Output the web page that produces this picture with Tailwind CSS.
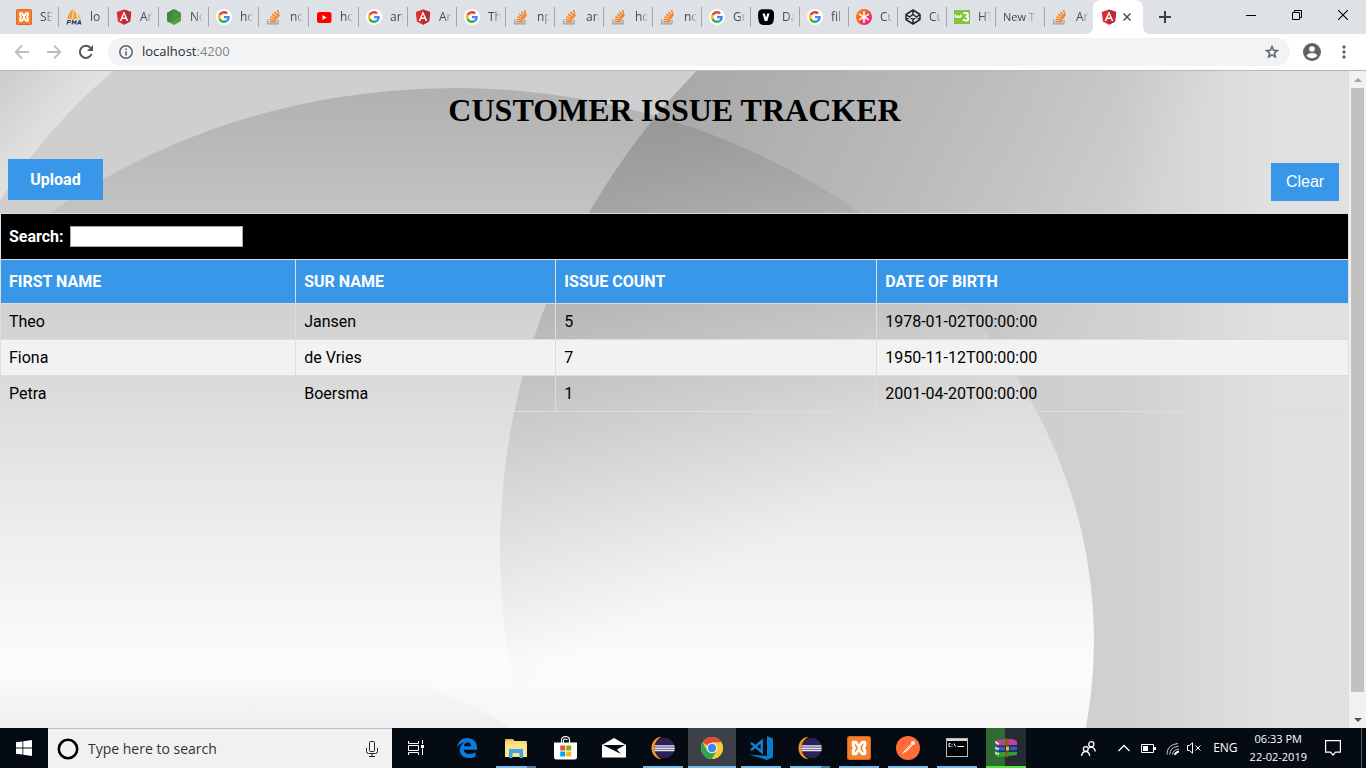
<!DOCTYPE html>
<html lang="en">
<head>
<meta charset="utf-8">
<title>Customer Issue Tracker</title>
<script src="https://cdn.jsdelivr.net/npm/@tailwindcss/browser@4"></script>
</head>
<body class="flex h-screen flex-col overflow-hidden bg-white font-['Open_Sans','Noto_Sans',sans-serif]">

<!-- Shared icons -->
<svg class="hidden" aria-hidden="true">
  <symbol id="google" viewBox="0 0 16 16"><circle cx="8" cy="8" r="8" fill="#fff"/><g transform="translate(2 2) scale(.25)"><path fill="#ea4335" d="M24 9.500c3.540 0 6.710 1.220 9.210 3.600l6.850-6.850C35.900 2.380 30.470 0 24 0 14.620 0 6.510 5.380 2.560 13.220l7.980 6.190C12.430 13.720 17.740 9.500 24 9.500z"/><path fill="#4285f4" d="M46.980 24.550c0-1.570-.15-3.090-.38-4.550H24v9.020h12.940c-.58 2.960-2.260 5.480-4.780 7.180l7.730 6c4.510-4.180 7.090-10.360 7.090-17.650z"/><path fill="#fbbc05" d="M10.530 28.590c-.48-1.450-.76-2.990-.76-4.590s.27-3.140.76-4.590l-7.980-6.190C.92 16.460 0 20.120 0 24c0 3.880.92 7.540 2.560 10.780l7.970-6.190z"/><path fill="#34a853" d="M24 48c6.480 0 11.930-2.130 15.890-5.810l-7.730-6c-2.150 1.450-4.920 2.300-8.160 2.300-6.260 0-11.570-4.220-13.470-9.910l-7.980 6.190C6.510 42.620 14.620 48 24 48z"/></g></symbol>
  <symbol id="angular" viewBox="0 0 16 16"><path d="M8 .4 15.200 3 14.100 12.400 8 15.800 1.900 12.400.8 3z" fill="#dd2b36"/><path d="M8 .4 15.200 3 14.100 12.400 8 15.800z" fill="#b52e31"/><path d="M8 2.200 3.600 12h1.700l.9-2.100h3.600l.9 2.100h1.700zM8 5.300l1.300 3.200H6.700z" fill="#fff"/></symbol>
  <symbol id="stack" viewBox="0 0 16 16" fill="none"><path d="M1.700 10.500v4.300h10.300v-4.300" stroke="#9aa0a6" stroke-width="1.200"/><path d="M3.500 12.700h6.700M3.700 10.300l6.600 1M4.500 7.700l6.300 2.200M6.100 5.100l5.600 3.800M8.500 2.800l4 5.200M11.600 1l1.500 6" stroke="#f48024" stroke-width="1.400"/></symbol>
  <symbol id="xampp" viewBox="0 0 24 24"><rect width="24" height="24" rx="2.500" fill="#d9631a"/><rect x="1" y="1" width="22" height="22" rx="2" fill="#f4812c"/><path d="M6.200 6.200h2.300c1.500 0 1 3.300 3.500 3.300s2-3.300 3.500-3.300h2.300v3.300L16.500 12l1.300 2.500v3.300h-2.300c-1.500 0-1-3.300-3.500-3.300s-2 3.300-3.500 3.300H6.200v-3.300L7.500 12 6.200 9.500zM12 9.500v5" fill="none" stroke="#fff" stroke-width="2.900" stroke-linejoin="round"/></symbol>
  <symbol id="eclipse" viewBox="0 0 24 24"><path d="M10.500.8C4.600 1 .5 6 .5 12s4.100 11 10 11.200C6.500 21 3.800 17 3.800 12S6.500 3 10.500.8z" fill="#f7941e"/><circle cx="13.500" cy="12" r="10.300" fill="#2c2255"/><path d="M3.600 9.200h19.800v1.600H3.600zm-.3 2.200h20.400v1.700H3.300zm.3 2.400h19.800v1.500H3.600z" fill="#e8e6f2"/><path d="M3.500 10.800h20v.6h-20zm0 2.300h20v.7h-20z" fill="#8c85b4"/></symbol>
</svg>

<!-- Tab strip -->
<header class="flex h-[34px] shrink-0 items-stretch bg-[#dee1e6] pl-[9px] text-[12px] text-[#45494d]">
  <nav class="flex" aria-label="Tabs">
    <div class="flex w-[50px] items-center pl-[7px]"><svg class="size-4 shrink-0"><use href="#xampp"/></svg><span class="ml-2 w-[13px] overflow-hidden whitespace-nowrap [mask-image:linear-gradient(to_right,black_40%,transparent)]">SE</span><i class="ml-auto h-5 w-px bg-[#a2a5a9]"></i></div>
    <div class="flex w-[50px] items-center pl-[7px]"><svg class="size-4 shrink-0" viewBox="0 0 16 16"><path d="M7 0C4 2 2 6 1 10h5zM8 1c2 2 3 5 3 9H7z" fill="#f6a22d"/><path d="M12 4c1.500 2 2 4 3.500 6H12z" fill="#f6c06a"/><path d="M1 15.500l1-4h1.800q1 0 .8 1t-1.400 1H2M6 15.500l1-4 1.300 2.500 2-2.500-.7 4M11.500 15.500l2-4h.5l.8 4M12.300 14.300h2" fill="none" stroke="#343e75" stroke-width="1.200"/></svg><span class="ml-2 w-[13px] overflow-hidden whitespace-nowrap [mask-image:linear-gradient(to_right,black_70%,transparent)]">lo</span><i class="ml-auto h-5 w-px bg-[#a2a5a9]"></i></div>
    <div class="flex w-[50px] items-center pl-[7px]"><svg class="size-4 shrink-0"><use href="#angular"/></svg><span class="ml-2 w-[13px] overflow-hidden whitespace-nowrap [mask-image:linear-gradient(to_right,black_40%,transparent)]">An</span><i class="ml-auto h-5 w-px bg-[#a2a5a9]"></i></div>
    <div class="flex w-[50px] items-center pl-[7px]"><svg class="size-4 shrink-0" viewBox="0 0 16 16"><path d="M8 0l7 4v8l-7 4-7-4V4z" fill="#539e43"/><path d="M8 0 1 4v8l3 1.700z" fill="#3e863d"/><path d="M8 0l7 4v3L4 13.700z" fill="#48913f"/></svg><span class="ml-2 w-[13px] overflow-hidden whitespace-nowrap [mask-image:linear-gradient(to_right,black_40%,transparent)]">No</span><i class="ml-auto h-5 w-px bg-[#a2a5a9]"></i></div>
    <div class="flex w-[50px] items-center pl-[7px]"><svg class="size-4 shrink-0"><use href="#google"/></svg><span class="ml-2 w-[13px] overflow-hidden whitespace-nowrap [mask-image:linear-gradient(to_right,black_40%,transparent)]">ho</span><i class="ml-auto h-5 w-px bg-[#a2a5a9]"></i></div>
    <div class="flex w-[50px] items-center pl-[7px]"><svg class="size-4 shrink-0"><use href="#stack"/></svg><span class="ml-2 w-[13px] overflow-hidden whitespace-nowrap [mask-image:linear-gradient(to_right,black_40%,transparent)]">no</span><i class="ml-auto h-5 w-px bg-[#a2a5a9]"></i></div>
    <div class="flex w-[50px] items-center pl-[7px]"><svg class="size-4 shrink-0" viewBox="0 0 16 16"><rect x="1" y="3" width="14.500" height="11" rx="2.500" fill="#f00"/><path d="M6.500 6v5L10.500 8.500z" fill="#fff"/></svg><span class="ml-2 w-[13px] overflow-hidden whitespace-nowrap [mask-image:linear-gradient(to_right,black_40%,transparent)]">ho</span><i class="ml-auto h-5 w-px bg-[#a2a5a9]"></i></div>
    <div class="flex w-[49px] items-center pl-[7px]"><svg class="size-4 shrink-0"><use href="#google"/></svg><span class="ml-2 w-[13px] overflow-hidden whitespace-nowrap [mask-image:linear-gradient(to_right,black_70%,transparent)]">an</span><i class="ml-auto h-5 w-px bg-[#a2a5a9]"></i></div>
    <div class="flex w-[49px] items-center pl-[7px]"><svg class="size-4 shrink-0"><use href="#angular"/></svg><span class="ml-2 w-[13px] overflow-hidden whitespace-nowrap [mask-image:linear-gradient(to_right,black_40%,transparent)]">An</span><i class="ml-auto h-5 w-px bg-[#a2a5a9]"></i></div>
    <div class="flex w-[49px] items-center pl-[7px]"><svg class="size-4 shrink-0"><use href="#google"/></svg><span class="ml-2 w-[13px] overflow-hidden whitespace-nowrap [mask-image:linear-gradient(to_right,black_40%,transparent)]">Th</span><i class="ml-auto h-5 w-px bg-[#a2a5a9]"></i></div>
    <div class="flex w-[49px] items-center pl-[7px]"><svg class="size-4 shrink-0"><use href="#stack"/></svg><span class="ml-2 w-[13px] overflow-hidden whitespace-nowrap [mask-image:linear-gradient(to_right,black_40%,transparent)]">np</span><i class="ml-auto h-5 w-px bg-[#a2a5a9]"></i></div>
    <div class="flex w-[49px] items-center pl-[7px]"><svg class="size-4 shrink-0"><use href="#stack"/></svg><span class="ml-2 w-[13px] overflow-hidden whitespace-nowrap [mask-image:linear-gradient(to_right,black_70%,transparent)]">an</span><i class="ml-auto h-5 w-px bg-[#a2a5a9]"></i></div>
    <div class="flex w-[49px] items-center pl-[7px]"><svg class="size-4 shrink-0"><use href="#stack"/></svg><span class="ml-2 w-[13px] overflow-hidden whitespace-nowrap [mask-image:linear-gradient(to_right,black_40%,transparent)]">ho</span><i class="ml-auto h-5 w-px bg-[#a2a5a9]"></i></div>
    <div class="flex w-[49px] items-center pl-[7px]"><svg class="size-4 shrink-0"><use href="#stack"/></svg><span class="ml-2 w-[13px] overflow-hidden whitespace-nowrap [mask-image:linear-gradient(to_right,black_40%,transparent)]">no</span><i class="ml-auto h-5 w-px bg-[#a2a5a9]"></i></div>
    <div class="flex w-[49px] items-center pl-[7px]"><svg class="size-4 shrink-0"><use href="#google"/></svg><span class="ml-2 w-[13px] overflow-hidden whitespace-nowrap [mask-image:linear-gradient(to_right,black_40%,transparent)]">Gr</span><i class="ml-auto h-5 w-px bg-[#a2a5a9]"></i></div>
    <div class="flex w-[49px] items-center pl-[7px]"><svg class="size-4 shrink-0" viewBox="0 0 16 16"><path d="M3 .5C5 0 11 0 13 .5 15 1 15.500 2 16 4c.2 3 0 6-.5 8-.5 2.500-1.500 3.200-3.500 3.700-2 .4-6 .4-8 0-2-.5-2.800-1.500-3.300-3.700C0 9 0 6 .2 4 .5 2 1 1 3 .5z"/><path d="M4.500 4.500h2.300L8 8.500l1.300-4h2.200L9.300 12H6.700z" fill="#fff"/></svg><span class="ml-2 w-[13px] overflow-hidden whitespace-nowrap [mask-image:linear-gradient(to_right,black_40%,transparent)]">Da</span><i class="ml-auto h-5 w-px bg-[#a2a5a9]"></i></div>
    <div class="flex w-[49px] items-center pl-[7px]"><svg class="size-4 shrink-0"><use href="#google"/></svg><span class="ml-2 w-[13px] overflow-hidden whitespace-nowrap [mask-image:linear-gradient(to_right,black_40%,transparent)]">fil</span><i class="ml-auto h-5 w-px bg-[#a2a5a9]"></i></div>
    <div class="flex w-[49px] items-center pl-[7px]"><svg class="size-4 shrink-0" viewBox="0 0 16 16"><linearGradient id="snow" x1="0" y1="0" x2="1" y2="1"><stop offset=".1" stop-color="#ff8a00"/><stop offset=".9" stop-color="#e5158a"/></linearGradient><circle cx="8" cy="8" r="8" fill="url(#snow)"/><path d="M8 3v10M3.700 5.500l8.600 5M3.700 10.500l8.600-5" stroke="#fff" stroke-opacity=".9" stroke-width="1.800" stroke-linecap="round"/></svg><span class="ml-2 w-[13px] overflow-hidden whitespace-nowrap [mask-image:linear-gradient(to_right,black_40%,transparent)]">Cu</span><i class="ml-auto h-5 w-px bg-[#a2a5a9]"></i></div>
    <div class="flex w-[49px] items-center pl-[7px]"><svg class="size-4 shrink-0" viewBox="0 0 16 16" fill="none" stroke="#26282b" stroke-width="1.500" stroke-linejoin="round"><path d="M8 1l7 4.500v5L8 15l-7-4.500v-5zM8 1v4.500M8 15v-4.500M1 5.500l7 5 7-5M1 10.500l7-5 7 5"/></svg><span class="ml-2 w-[13px] overflow-hidden whitespace-nowrap [mask-image:linear-gradient(to_right,black_40%,transparent)]">Cu</span><i class="ml-auto h-5 w-px bg-[#a2a5a9]"></i></div>
    <div class="flex w-[49px] items-center pl-[7px]"><svg class="size-4 shrink-0" viewBox="0 0 16 16"><rect y="1" width="16" height="14" fill="#82c341"/><path d="M1.300 5.500v1.700c0 1.400 2.800 1.400 2.800 0V6v1.200c0 1.400 2.900 1.400 2.900 0V5.500" fill="none" stroke="#fff" stroke-width="1.500"/><path d="M9.500 5c.5-1.700 4.500-1.600 4.500.6 0 1.600-1.500 1.900-2.400 1.900 1.300 0 2.700.6 2.700 2.300 0 2.400-4.300 2.600-5 .3" fill="none" stroke="#fff" stroke-width="1.800"/></svg><span class="ml-2 w-[13px] overflow-hidden whitespace-nowrap [mask-image:linear-gradient(to_right,black_40%,transparent)]">HT</span><i class="ml-auto h-5 w-px bg-[#a2a5a9]"></i></div>
    <div class="flex w-[49px] items-center pl-[7px]"><span class="w-[34px] overflow-hidden whitespace-nowrap text-[11px] [mask-image:linear-gradient(to_right,black_65%,transparent)]">New T</span><i class="ml-auto h-5 w-px bg-[#a2a5a9]"></i></div>
    <div class="flex w-12 items-center pl-[7px]"><svg class="size-4 shrink-0"><use href="#stack"/></svg><span class="ml-2 w-[13px] overflow-hidden whitespace-nowrap [mask-image:linear-gradient(to_right,black_40%,transparent)]">An</span></div>
    <div class="relative flex w-[50px] items-center rounded-t-lg bg-white pl-2">
      <svg class="absolute bottom-0 -left-2 size-2" viewBox="0 0 8 8"><path d="M8 0v8H0c5 0 8-3 8-8z" fill="#fff"/></svg>
      <svg class="absolute -right-2 bottom-0 size-2" viewBox="0 0 8 8"><path d="M0 0v8h8C3 8 0 5 0 0z" fill="#fff"/></svg>
      <svg class="size-4 shrink-0"><use href="#angular"/></svg>
      <button class="ml-0.5 flex size-4 items-center justify-center" aria-label="Close tab"><svg class="size-2" viewBox="0 0 8 8"><path d="M.5.5l7 7M7.500.5l-7 7" stroke="#4d5156" stroke-width="1.500"/></svg></button>
    </div>
  </nav>
  <button class="ml-4 flex items-center" aria-label="New tab"><svg class="size-3" viewBox="0 0 12 12"><path d="M6 0v12M0 6h12" stroke="#3c4043" stroke-width="2"/></svg></button>
  <div class="ml-auto flex h-[29px] items-center">
    <button class="flex w-[46px] justify-center" aria-label="Minimize"><svg class="size-[10px]" viewBox="0 0 10 10"><path d="M0 5.500h10" stroke="#000"/></svg></button>
    <button class="flex w-[46px] justify-center" aria-label="Restore"><svg class="size-[10px]" viewBox="0 0 10 10" fill="none" stroke="#000"><path d="M.5 2.500h7v7h-7zM2.500 2.500v-2h7v7h-2"/></svg></button>
    <button class="flex w-[46px] justify-center" aria-label="Close"><svg class="size-[10px]" viewBox="0 0 10 10"><path d="M0 0l10 10M10 0L0 10" stroke="#000" stroke-width="1.100"/></svg></button>
  </div>
</header>

<!-- Toolbar -->
<div class="flex h-[37px] shrink-0 items-center border-b border-[#b6b6b6] bg-white pr-5 pl-[14px]">
  <button aria-label="Back"><svg class="size-4" viewBox="0 0 16 16" fill="none" stroke="#bbbdbf" stroke-width="1.800"><path d="M15 8H2M8 1.500L1.700 8 8 14.500"/></svg></button>
  <button class="ml-4" aria-label="Forward"><svg class="size-4" viewBox="0 0 16 16" fill="none" stroke="#bbbdbf" stroke-width="1.800"><path d="M1 8h13M8 1.500L14.300 8 8 14.500"/></svg></button>
  <button class="ml-4" aria-label="Reload"><svg class="size-4" viewBox="0 0 16 16"><path d="M13.500 10A6 6 0 1 1 12.300 3.800" fill="none" stroke="#53575c" stroke-width="2"/><path d="M15 1v6H9z" fill="#53575c"/></svg></button>
  <div class="ml-[14px] flex h-7 flex-1 items-center rounded-full bg-[#f1f3f4] pr-[10px] pl-[11px]">
    <svg class="size-[14px] shrink-0" viewBox="0 0 14 14"><circle cx="7" cy="7" r="6.200" fill="none" stroke="#5f6368" stroke-width="1.500"/><path d="M6.200 6.200h1.600v4.300H6.200zM6.200 3.400h1.600V5H6.200z" fill="#5f6368"/></svg>
    <a href="#" class="ml-[9px] text-[13px] text-[#2b2e31]">localhost<span class="text-[#80868b]">:4200</span></a>
    <button class="ml-auto" aria-label="Bookmark"><svg class="size-4" viewBox="0 0 24 24"><path d="M22 9.240l-7.190-.62L12 2 9.190 8.630 2 9.240l5.460 4.730L5.820 21 12 17.270 18.180 21l-1.630-7.030L22 9.240zM12 15.400l-3.760 2.270 1-4.280-3.320-2.880 4.380-.38L12 6.100l1.710 4.040 4.380.38-3.320 2.880 1 4.280L12 15.400z" fill="#5f6368" stroke="#5f6368" stroke-width=".8"/></svg></button>
  </div>
  <button class="ml-[13px]" aria-label="Profile"><svg class="size-[18px]" viewBox="0 0 18 18"><circle cx="9" cy="9" r="9" fill="#5f6368"/><circle cx="9" cy="6" r="2.800" fill="#fff"/><path d="M3.600 12.800C4.500 10.600 7 10 9 10s4.500.6 5.400 2.800C13.300 14.300 11.300 15.300 9 15.300s-4.300-1-5.400-2.500z" fill="#fff"/></svg></button>
  <button class="ml-[21px]" aria-label="Menu"><svg class="h-4 w-1" viewBox="0 0 4 16" fill="#5f6368"><circle cx="2" cy="3" r="1.700"/><circle cx="2" cy="8" r="1.700"/><circle cx="2" cy="13" r="1.700"/></svg></button>
</div>

<!-- Page -->
<div class="flex min-h-0 flex-1">
  <main class="relative isolate min-w-0 flex-1 overflow-hidden bg-[#cfcfcf] font-['Trebuchet_MS',Roboto,sans-serif] text-[16px] text-black">
    <svg class="absolute inset-0 -z-10 size-full" viewBox="0 0 1349 657" preserveAspectRatio="none" aria-hidden="true">
      <defs>
        <linearGradient id="fade" x1="0" x2="1349" gradientUnits="userSpaceOnUse" y1="0" y2="0"><stop offset=".76" stop-color="#cfcfcf"/><stop offset=".83" stop-color="#d0d0d0"/><stop offset=".94" stop-color="#e0e0e0"/></linearGradient>
        <linearGradient id="disc" x1="0" x2="0" gradientUnits="userSpaceOnUse" y1="17" y2="657"><stop offset="0" stop-color="#b1b1b1"/><stop offset=".2" stop-color="#c3c3c3"/><stop offset=".37" stop-color="#d3d3d3"/><stop offset=".53" stop-color="#e0e0e0"/><stop offset=".7" stop-color="#eeeeee"/><stop offset=".9" stop-color="#fcfcfc"/><stop offset="1" stop-color="#f6f6f6"/></linearGradient>
        <linearGradient id="shade" gradientUnits="userSpaceOnUse" x1="610" y1="60" x2="1070" y2="300"><stop offset="0" stop-color="#000" stop-opacity=".2"/><stop offset=".5" stop-color="#000" stop-opacity=".11"/><stop offset="1" stop-color="#000" stop-opacity="0"/></linearGradient>
        <linearGradient id="inner" gradientUnits="userSpaceOnUse" x1="206" y1="350" x2="406" y2="690"><stop offset="0" stop-color="#000" stop-opacity=".16"/><stop offset="1" stop-color="#000" stop-opacity="0"/></linearGradient>
        <linearGradient id="corner" gradientUnits="userSpaceOnUse" x1="0" y1="20" x2="50" y2="62"><stop offset="0" stop-color="#cfcfcf"/><stop offset="1" stop-color="#e1e1e1"/></linearGradient>
        <linearGradient id="low" gradientUnits="userSpaceOnUse" x1="0" y1="612" x2="0" y2="657"><stop offset="0" stop-color="#efefef" stop-opacity="0"/><stop offset="1" stop-color="#efefef"/></linearGradient>
        <clipPath id="right"><ellipse cx="1164" cy="480" rx="664" ry="676"/></clipPath>
      </defs>
      <path d="M0 0h1349v657H0z" fill="url(#fade)"/>
      <path d="M0 0h113Q45 58 0 130z" fill="url(#corner)"/>
      <path d="M0 0h1349v657H0z" fill="url(#shade)" clip-path="url(#right)"/>
      <ellipse cx="455" cy="569" rx="639" ry="552" fill="url(#disc)"/>
      <path d="M0 657V600H390Q460 625 512 657z" fill="url(#low)"/>
      <g clip-path="url(#right)"><ellipse cx="455" cy="569" rx="639" ry="552" fill="url(#inner)"/></g>
    </svg>

    <h1 class="pt-[21px] text-center font-['Liberation_Serif',serif] text-[32px] leading-9 font-bold">CUSTOMER ISSUE TRACKER</h1>
    <div class="mt-[31px] flex items-start justify-between pr-[10px] pl-2">
      <button class="h-[41px] w-[95px] bg-[#3897e8] font-bold text-white">Upload</button>
      <button class="mt-1 h-[38px] w-[68px] bg-[#3897e8] font-['Liberation_Sans',sans-serif] text-white">Clear</button>
    </div>
    <table class="mt-3 w-full table-fixed border-collapse text-left leading-[19px]">
      <colgroup><col class="w-[21.9%]"><col class="w-[19.3%]"><col class="w-[23.8%]"><col></colgroup>
      <thead>
        <tr class="h-[46px] bg-black text-white"><th colspan="4" class="border border-[#ddd] px-2 py-0"><div class="flex items-center"><label for="search" class="w-[61px]">Search:</label><input id="search" type="text" class="h-[21px] w-[173px] border border-[#a9a9a9] bg-white px-1 text-[13px] font-normal text-black"></div></th></tr>
        <tr class="h-11 bg-[#3897e8] text-white"><th class="border border-[#ddd] px-2 py-0">FIRST NAME</th><th class="border border-[#ddd] px-2 py-0">SUR NAME</th><th class="border border-[#ddd] px-2 py-0">ISSUE COUNT</th><th class="border border-[#ddd] px-2 py-0">DATE OF BIRTH</th></tr>
      </thead>
      <tbody>
        <tr class="h-9"><td class="border border-[#ddd] px-2 py-0">Theo</td><td class="border border-[#ddd] px-2 py-0">Jansen</td><td class="border border-[#ddd] px-2 py-0">5</td><td class="border border-[#ddd] px-2 py-0">1978-01-02T00:00:00</td></tr>
        <tr class="h-9 bg-[#f2f2f2]"><td class="border border-[#ddd] px-2 py-0">Fiona</td><td class="border border-[#ddd] px-2 py-0">de Vries</td><td class="border border-[#ddd] px-2 py-0">7</td><td class="border border-[#ddd] px-2 py-0">1950-11-12T00:00:00</td></tr>
        <tr class="h-9"><td class="border border-[#ddd] px-2 py-0">Petra</td><td class="border border-[#ddd] px-2 py-0">Boersma</td><td class="border border-[#ddd] px-2 py-0">1</td><td class="border border-[#ddd] px-2 py-0">2001-04-20T00:00:00</td></tr>
      </tbody>
    </table>
  </main>
  <div class="flex w-[17px] shrink-0 flex-col items-center bg-[#f1f1f1]" aria-hidden="true">
    <div class="flex h-[17px] items-center"><svg class="h-1 w-2" viewBox="0 0 8 4"><path d="M0 4l4-4 4 4z" fill="#a3a3a3"/></svg></div>
    <div class="flex w-full flex-1 flex-col items-center"><div class="h-[97%] w-[13px] bg-[#c1c1c1]"></div></div>
    <div class="flex h-[17px] items-center"><svg class="h-1 w-2" viewBox="0 0 8 4"><path d="M0 0l4 4 4-4z" fill="#505050"/></svg></div>
  </div>
</div>

<!-- Taskbar -->
<footer class="flex h-10 shrink-0 bg-[#050b13] text-white">
  <button class="flex w-12 items-center justify-center" aria-label="Start"><svg class="size-4" viewBox="0 0 16 16" fill="#fff"><path d="M0 2.300L6.500 1.400V7.600H0zM7.300 1.300L16 0v7.600H7.300zM0 8.400h6.500v6.200L0 13.700zM7.300 8.400H16V16l-8.700-1.200z"/></svg></button>
  <div class="flex w-[344px] items-center border-t border-[#bdbdbd] bg-[#f1f1f1] pr-[14px] pl-[9px]">
    <svg class="size-[22px] shrink-0" viewBox="0 0 22 22"><circle cx="11" cy="11" r="9.200" fill="none" stroke="#000" stroke-width="2.600"/></svg>
    <input type="text" aria-label="Search" placeholder="Type here to search" class="ml-[9px] min-w-0 flex-1 bg-transparent text-[14px] placeholder:text-[#333]">
    <svg class="h-4 w-3 shrink-0" viewBox="0 0 12 16" fill="none" stroke="#222"><rect x="3.500" y=".5" width="5" height="10" rx="1"/><path d="M.5 7v3.500q0 2 2 2h7q2 0 2-2V7M6 12.500V15M3 15.500h6"/></svg>
  </div>
  <button class="flex w-12 items-center justify-center" aria-label="Task view"><svg class="size-4" viewBox="0 0 16 16" fill="none" stroke="#fff"><path d="M.5 1v2.500h10V1M.5 15v-2.500h10V15M.5 5.500h10v5H.5zM14.500 0v4M14.500 8.500V15"/><path d="M13 5h3v3h-3z" fill="#fff" stroke="none"/></svg></button>
  <nav class="ml-[3px] flex gap-px" aria-label="Apps">
    <button class="flex w-12 items-center justify-center" aria-label="Edge"><svg class="size-5" viewBox="0 0 20 20"><path d="M0 9.500C.8 4 4.500 0 10.200 0 16 0 20 4 20 9.500v2.300H6.800c.3 3 2.700 4.200 5.600 4.200 2.300 0 4.400-.6 6.200-1.700v4.200C16.600 19.500 14.300 20 11.700 20 6 20 2.800 16.500 2.800 12c0-3.500 1.800-6.300 5-7.800C4.500 4.500 1.500 6.500 0 9.500zM6.900 8.200h7.200C14 5.800 12.800 4.600 10.700 4.600 8.700 4.600 7.300 6 6.900 8.200z" fill="#0a7bdb"/></svg></button>
    <button class="flex w-12 flex-col items-center" aria-label="File Explorer"><svg class="mt-2 h-6 w-[22px]" viewBox="0 0 22 24"><path d="M0 4q0-1 1-1h7l1.500 2H21q1 0 1 1v15H0z" fill="#e8bd56"/><path d="M0 8h22v13H0z" fill="#fde28f"/><path d="M0 5h21v3H0z" fill="#fbd973"/><path d="M4 13h14v9h-3.500v-5h-7v5H4z" fill="#3aa7e8"/></svg><span class="mt-auto flex h-0.5 w-10 bg-[#76b9ed]"><span class="ml-auto w-[9px] bg-[#4f7ca1]"></span></span></button>
    <button class="flex w-12 items-center justify-center" aria-label="Store"><svg class="h-6 w-[23px]" viewBox="0 0 23 24"><path d="M7.500 7V4q0-3 4-3.500 4 .5 4 3.500v3M9.500 7V4q1-2 4 0" fill="none" stroke="#fff" stroke-width="1.200"/><path d="M0 6.500h23V21q0 2.500-2.500 2.500h-18Q0 23.500 0 21z" fill="#fff"/><path d="M6.200 9.500h5v5h-5z" fill="#f25022"/><path d="M12.200 9.500h5v5h-5z" fill="#7fba00"/><path d="M6.200 15.500h5v5h-5z" fill="#00a4ef"/><path d="M12.200 15.500h5v5h-5z" fill="#ffb900"/></svg></button>
    <button class="flex w-12 items-center justify-center" aria-label="Mail"><svg class="h-5 w-6" viewBox="0 0 24 20"><path d="M12 0l12 7v12.500H0V7z" fill="#fff"/><path d="M1 7h22l-8 4.500 4 4.500-8-4z" fill="#050b13"/></svg></button>
    <button class="flex w-12 flex-col items-center" aria-label="Eclipse"><svg class="mt-2 size-6"><use href="#eclipse"/></svg><span class="mt-auto h-0.5 w-10 bg-[#76b9ed]"></span></button>
    <button class="flex w-12 flex-col items-center bg-[#3c4047]" aria-label="Chrome"><svg class="mt-[9px] size-[22px]" viewBox="0 0 22 22"><circle cx="11" cy="11" r="11" fill="#fbc936"/><path d="M11 11L1.500 5.500A11 11 0 0 1 20.500 5.500H11z" fill="#e04a3b"/><path d="M11 11L6.300 13.700 1.500 5.500A11 11 0 0 0 11 22l4.800-8.200z" fill="#2ca45a"/><path d="M11 5.500h9.500A11 11 0 0 1 11 22l4.800-8.200z" fill="#fbc936"/><circle cx="11" cy="11" r="5.300" fill="#f3f3f3"/><circle cx="11" cy="11" r="4.200" fill="#3f86f0"/></svg><span class="mt-auto h-0.5 w-12 bg-[#76b9ed]"></span></button>
    <button class="flex w-12 flex-col items-center" aria-label="Visual Studio Code"><svg class="mt-2 size-6" viewBox="0 0 24 24"><path d="M18 0l6 2.500v19L18 24 0 18.500l18 1.500z" fill="#0b7ccb"/><path d="M2 6.800L12.700 15.800V5.200L2 14.200" fill="none" stroke="#1284d3" stroke-width="2.400"/></svg><span class="mt-auto h-0.5 w-10 bg-[#76b9ed]"></span></button>
    <button class="flex w-12 flex-col items-center" aria-label="Eclipse workspace"><svg class="mt-2 size-6"><use href="#eclipse"/></svg><span class="mt-auto flex h-0.5 w-10 bg-[#76b9ed]"><span class="ml-auto w-[9px] bg-[#4f7ca1]"></span></span></button>
    <button class="flex w-12 flex-col items-center" aria-label="XAMPP"><svg class="mt-2 size-6"><use href="#xampp"/></svg><span class="mt-auto h-0.5 w-10 bg-[#76b9ed]"></span></button>
    <button class="flex w-12 flex-col items-center" aria-label="Postman"><svg class="mt-2 size-6" viewBox="0 0 24 24"><circle cx="12" cy="12" r="12" fill="#ff6c37"/><path d="M5.500 18.500l4.500-6 5-4.500 1.500 1.500-5 5z" fill="#fff"/><circle cx="17" cy="7" r="2" fill="#fff"/><path d="M9 14.500l7-6" stroke="#ff6c37" stroke-width=".8"/></svg><span class="mt-auto h-0.5 w-10 bg-[#76b9ed]"></span></button>
    <button class="flex w-12 flex-col items-center" aria-label="Command Prompt"><svg class="mt-[10px] h-[19px] w-[22px]" viewBox="0 0 22 19"><rect x=".5" y=".5" width="21" height="18" fill="#050505" stroke="#b8bcc0"/><path d="M1 1h20v2H1z" fill="#d5d8da"/><path d="M4.500 5.500H3v3h1.500M6 6v.8M6 8v.8M8 5.500l1.500 3.200M11.500 8.500H18" stroke="#fff" fill="none"/></svg><span class="mt-auto h-0.5 w-10 bg-[#76b9ed]"></span></button>
    <button class="ml-1 flex w-10 flex-col items-center bg-linear-to-r from-[#2f6b33] from-48% to-[#252a33] to-48%" aria-label="WinRAR"><svg class="mt-[10px] h-5 w-6" viewBox="0 0 24 20"><path d="M2 2l16-1 5 2v4l-19 1-3-2z" fill="#b5489c"/><path d="M1 8l3 1 19-1v4l-19 1.500L1 12z" fill="#2d5be0"/><path d="M1 13l3 1.500L23 13v4L4 19l-3-2z" fill="#2ca52c"/><path d="M1 3l4 2v2L1 5zM1 9l4 1v2l-4-1zM1 14l4 1v2l-4-1z" fill="#ddd"/><path d="M4 8h19M4 13.200h19" stroke="#222"/><path d="M10.500 0l4 1v18l-3 .5z" fill="#8a5a20"/><path d="M11.500 8h4v5h-4z" fill="#d8c060" stroke="#333"/></svg><span class="mt-auto h-0.5 w-10 bg-[#55e23a]"></span></button>
  </nav>
  <div class="ml-auto flex items-center">
    <svg class="size-[15px]" viewBox="0 0 15 15" fill="none" stroke="#fff" stroke-width="1.300"><circle cx="10.300" cy="3.300" r="2.600"/><path d="M7.500 7.500Q10 5 12.500 7q1.800 1.400 1.800 3.500"/><circle cx="4.800" cy="8" r="2.400"/><path d="M.7 15q.5-4.500 4-4.500t4 4.500"/></svg>
    <svg class="ml-[22px] h-2 w-3" viewBox="0 0 12 8"><path d="M.5 7L6 1.500 11.500 7" fill="none" stroke="#fff" stroke-width="1.300"/></svg>
    <svg class="ml-[11px] h-[9px] w-[15px]" viewBox="0 0 15 9"><path d="M.5.5h12v8H.5z" fill="none" stroke="#fff"/><path d="M2 2h5v5H2zM13 3h2v3h-2z" fill="#fff"/></svg>
    <svg class="ml-[10px] size-[13px]" viewBox="0 0 13 13" fill="none" stroke="#fff"><path d="M9 13q0-2.500 4-3.500" stroke-width="2"/><path d="M6.500 12.500Q7 7.500 13 7M3.700 12.500Q4 5 12.500 4.200M1 12.500Q1 2.500 12 1.500" stroke="#c4c6c8"/></svg>
    <svg class="ml-2 h-3 w-[15px]" viewBox="0 0 15 12" fill="none" stroke="#fff"><path d="M.5 3.500h2L5.500.8v10.400L2.500 8.500h-2zM8.500 3.500l5 5M13.500 3.500l-5 5"/></svg>
    <span class="ml-[11px] text-[12px]">ENG</span>
    <div class="ml-3 text-center text-[11px] leading-[18px]"><div>06:33 PM</div><div>22-02-2019</div></div>
    <svg class="ml-[18px] h-4 w-4" viewBox="0 0 16 16" fill="none" stroke="#fff" stroke-width="1.200"><path d="M.6.600h14.800v11.500h-4.800L8 15l-2.500-2.900H.6z"/></svg>
    <i class="mr-1 ml-5 h-10 w-px bg-[#5a5e64]"></i>
  </div>
</footer>
</body>
</html>
